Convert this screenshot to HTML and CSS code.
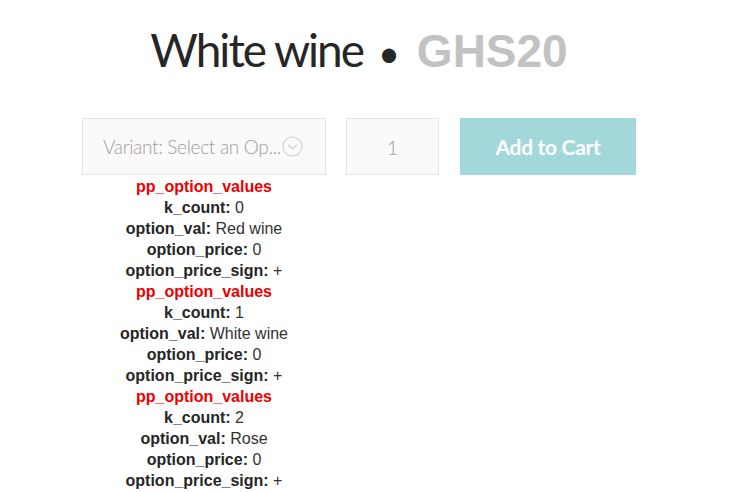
FILE: index.html
```html
<!DOCTYPE html>
<html lang="en">
<head>
  <meta charset="UTF-8">
  <meta name="viewport" content="width=device-width, initial-scale=1.0">
  <title>White wine</title>
  <link rel="stylesheet" href="styles.css">
</head>
<body>

<div class="product">
  <h1 class="product-title">
    <span class="name">White wine</span>
    <span class="dot">&bull;</span>
    <span class="price">GHS20</span>
  </h1>

  <form class="cart-row" onsubmit="return false;">
    <div class="variant-col">
      <div class="variant-select">
        <span class="variant-text">Variant: Select an Op...</span>
        <svg class="chevron" width="21" height="21" viewBox="0 0 21 21">
          <circle cx="10.5" cy="10.5" r="9.5" fill="none" stroke="#d6d3d4" stroke-width="1.2"/>
          <path d="M6.3 8.8 L10.5 13 L14.7 8.8" fill="none" stroke="#d6d3d4" stroke-width="1.4"/>
        </svg>
      </div>

      <!-- debug dump of options -->
      <div class="debug">
        <div class="dbg-title">pp_option_values</div>
        <div><b>k_count:</b> 0</div>
        <div><b>option_val:</b> Red wine</div>
        <div><b>option_price:</b> 0</div>
        <div><b>option_price_sign:</b> +</div>
        <div class="dbg-title">pp_option_values</div>
        <div><b>k_count:</b> 1</div>
        <div><b>option_val:</b> White wine</div>
        <div><b>option_price:</b> 0</div>
        <div><b>option_price_sign:</b> +</div>
        <div class="dbg-title">pp_option_values</div>
        <div><b>k_count:</b> 2</div>
        <div><b>option_val:</b> Rose</div>
        <div><b>option_price:</b> 0</div>
        <div><b>option_price_sign:</b> +</div>
      </div>
    </div>

    <div class="qty">1</div>
    <button class="add-btn" type="submit">Add to Cart</button>
  </form>
</div>

</body>
</html>
```

FILE: styles.css
```css
body {
  margin: 0;
  padding: 0;
  background: #ffffff;
  font-family: "Liberation Sans", Arial, sans-serif;
}

.product {
  width: 554px;
  padding-left: 82px;
}

/* Title */
.product-title {
  margin: 0;
  padding-top: 22px;
  height: 118px;
  box-sizing: border-box;
  text-align: center;
  font-weight: normal;
  line-height: 56px;
  white-space: nowrap;
}

.product-title .name {
  font-family: Lato, sans-serif;
  font-size: 46px;
  color: #262626;
  letter-spacing: -2px;
}

.product-title .dot {
  font-family: Lato, sans-serif;
  font-size: 38px;
  color: #262626;
  margin: 0 8px 0 6px;
}

.product-title .price {
  font-family: "Liberation Sans", Arial, sans-serif;
  font-size: 46px;
  font-weight: bold;
  color: #c2c2c2;
}

/* Cart row */
.cart-row {
  display: flex;
  align-items: flex-start;
  margin: 0;
}

.variant-col {
  width: 244px;
}

.variant-select {
  height: 57px;
  box-sizing: border-box;
  border: 1px solid #e9e5e7;
  background: #fbf9fa;
  display: flex;
  align-items: center;
  padding-left: 20px;
  color: #a09c9e;
  font-family: Lato, sans-serif;
  font-weight: 300;
  font-size: 19px;
  letter-spacing: -0.3px;
}

.variant-text {
  white-space: nowrap;
}

.chevron {
  margin-left: 1px;
}

.qty {
  width: 93px;
  height: 57px;
  box-sizing: border-box;
  margin-left: 20px;
  border: 1px solid #e9e5e7;
  background: #fbf9fa;
  display: flex;
  align-items: center;
  justify-content: center;
  color: #a09c9e;
  font-family: Lato, sans-serif;
  font-weight: 300;
  font-size: 20px;
}

.add-btn {
  width: 176px;
  height: 57px;
  margin-left: 21px;
  border: none;
  background: #a3d8da;
  color: #ffffff;
  font-family: Lato, sans-serif;
  font-weight: bold;
  font-size: 21px;
  letter-spacing: -0.3px;
  cursor: pointer;
}

/* Debug output */
.debug {
  text-align: center;
  font-size: 16px;
  line-height: 21px;
  color: #333333;
  padding-top: 1px;
}

.debug b {
  color: #262626;
}

.dbg-title {
  color: #ee0000;
  font-weight: bold;
}
```
